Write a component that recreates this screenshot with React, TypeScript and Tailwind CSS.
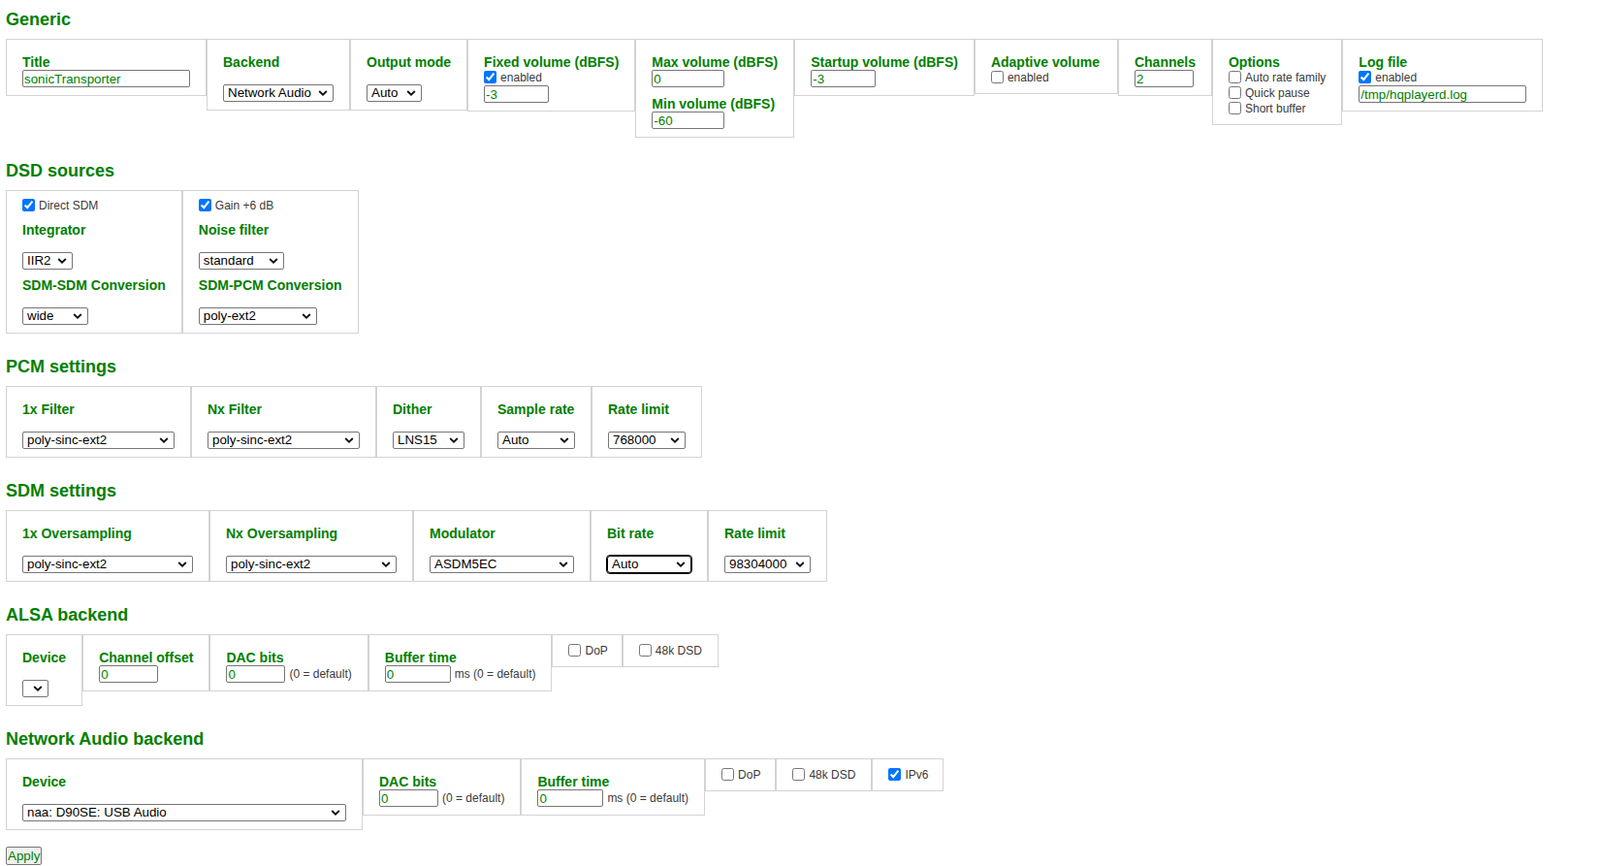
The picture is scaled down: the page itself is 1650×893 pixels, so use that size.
import React from "react";

type Kids = { children?: React.ReactNode; className?: string };

function Label({ children, className = "" }: Kids) {
  return (
    <div className={"whitespace-nowrap text-[14px] leading-4 font-bold text-[#008000] " + className}>
      {children}
    </div>
  );
}

function Cell({ children, className = "pt-2" }: Kids) {
  return <div className={"shrink-0 border border-[#d3d3d3] pl-4 pb-2 " + (className.includes("pr-") ? className : "pr-4 " + className)}>{children}</div>;
}

function TextInput({ value, className = "" }: { value: string; className?: string }) {
  return (
    <input
      type="text"
      defaultValue={value}
      className={
        "block h-[18px] rounded-[2px] border border-[#767676] bg-white px-[1px] text-[13.33px] leading-4 text-[#008000] outline-none " +
        className
      }
    />
  );
}

function Sel({ text, className = "", focused = false }: { text: string; className?: string; focused?: boolean }) {
  return (
    <div
      className={
        "relative flex h-[18px] items-center whitespace-nowrap bg-white pl-[4px] text-[13.33px] leading-4 text-black " +
        (focused
          ? "rounded-[3px] border border-black outline-1 outline-black "
          : "rounded-[2px] border border-[#767676] ") +
        className
      }
    >
      <span>{text}</span>
      <svg
        className="absolute right-[5px] top-1/2 -translate-y-1/2"
        width="10"
        height="7"
        viewBox="0 0 10 7"
      >
        <path d="M1.2 1.5l3.8 3.6 3.8-3.6" fill="none" stroke="#111" strokeWidth="1.9" />
      </svg>
    </div>
  );
}

function Check({ label, checked = false }: { label: string; checked?: boolean }) {
  return (
    <label className="flex h-4 items-center gap-[4px] whitespace-nowrap text-[12px] leading-4 text-[#3a3a3a]">
      <input type="checkbox" defaultChecked={checked} className="m-0 mb-[2px] h-[13px] w-[13px] shrink-0" />
      <span>{label}</span>
    </label>
  );
}

function Hint({ children }: Kids) {
  return <span className="whitespace-nowrap text-[12px] leading-4 text-[#3a3a3a]">{children}</span>;
}

function Section({ title, children, first = false }: { title: string; children?: React.ReactNode; first?: boolean }) {
  return (
    <section className={first ? "" : "mt-6"}>
      <h3 className="h-[21px] text-[18px] leading-[21px] font-bold text-[#008000]">{title}</h3>
      <div className="mt-[9px] flex items-start">{children}</div>
    </section>
  );
}

function SelCell({ label, text, className, focused = false }: { label: string; text: string; className: string; focused?: boolean }) {
  return (
    <Cell>
      <Label className="mt-[7px]">{label}</Label>
      <Sel text={text} focused={focused} className={"mt-[15px] " + className} />
    </Cell>
  );
}

export default function App() {
  return (
    <div className="min-h-[893px] bg-white pl-[6px] pt-[10px] font-['Liberation_Sans',Arial,sans-serif]">
      <Section title="Generic" first>
        <Cell>
          <Label className="mt-[7px]">Title</Label>
          <TextInput value="sonicTransporter" className="w-[173px]" />
        </Cell>
        <SelCell label="Backend" text="Network Audio" className="w-[114px]" />
        <SelCell label="Output mode" text="Auto" className="w-[57px]" />
        <Cell>
          <Label className="mt-[7px]">Fixed volume (dBFS)</Label>
          <Check label="enabled" checked />
          <TextInput value="-3" className="w-[67px]" />
        </Cell>
        <Cell>
          <Label className="mt-[7px]">Max volume (dBFS)</Label>
          <TextInput value="0" className="w-[75px]" />
          <Label className="mt-[9px]">Min volume (dBFS)</Label>
          <TextInput value="-60" className="w-[75px]" />
        </Cell>
        <Cell>
          <Label className="mt-[7px]">Startup volume (dBFS)</Label>
          <TextInput value="-3" className="w-[67px]" />
        </Cell>
        <Cell>
          <Label className="mt-[7px] pr-[2px]">Adaptive volume</Label>
          <Check label="enabled" />
        </Cell>
        <Cell>
          <Label className="mt-[7px]">Channels</Label>
          <TextInput value="2" className="w-[61px]" />
        </Cell>
        <Cell>
          <Label className="mt-[7px]">Options</Label>
          <Check label="Auto rate family" />
          <Check label="Quick pause" />
          <Check label="Short buffer" />
        </Cell>
        <Cell>
          <Label className="mt-[7px]">Log file</Label>
          <Check label="enabled" checked />
          <TextInput value="/tmp/hqplayerd.log" className="w-[173px]" />
        </Cell>
      </Section>

      <Section title="DSD sources">
        <Cell className="pt-[7px]">
          <Check label="Direct SDM" checked />
          <Label className="mt-[9px]">Integrator</Label>
          <Sel text="IIR2" className="mt-[15px] w-[52px]" />
          <Label className="mt-[8px]">SDM-SDM Conversion</Label>
          <Sel text="wide" className="mt-[15px] w-[68px]" />
        </Cell>
        <Cell className="pt-[7px]">
          <Check label="Gain +6 dB" checked />
          <Label className="mt-[9px]">Noise filter</Label>
          <Sel text="standard" className="mt-[15px] w-[88px]" />
          <Label className="mt-[8px]">SDM-PCM Conversion</Label>
          <Sel text="poly-ext2" className="mt-[15px] w-[122px]" />
        </Cell>
      </Section>

      <Section title="PCM settings">
        <SelCell label="1x Filter" text="poly-sinc-ext2" className="w-[157px]" />
        <SelCell label="Nx Filter" text="poly-sinc-ext2" className="w-[157px]" />
        <SelCell label="Dither" text="LNS15" className="w-[74px]" />
        <SelCell label="Sample rate" text="Auto" className="w-[80px]" />
        <SelCell label="Rate limit" text="768000" className="w-[80px]" />
      </Section>

      <Section title="SDM settings">
        <SelCell label="1x Oversampling" text="poly-sinc-ext2" className="w-[176px]" />
        <SelCell label="Nx Oversampling" text="poly-sinc-ext2" className="w-[176px]" />
        <SelCell label="Modulator" text="ASDM5EC" className="w-[149px]" />
        <SelCell label="Bit rate" text="Auto" className="w-[87px]" focused />
        <SelCell label="Rate limit" text="98304000" className="w-[89px]" />
      </Section>

      <Section title="ALSA backend">
        <SelCell label="Device" text="" className="w-[27px]" />
        <Cell>
          <Label className="mt-[7px]">Channel offset</Label>
          <TextInput value="0" className="w-[61px]" />
        </Cell>
        <Cell>
          <Label className="mt-[7px]">DAC bits</Label>
          <div className="flex items-center gap-1">
            <TextInput value="0" className="w-[61px]" />
            <Hint>(0 = default)</Hint>
          </div>
        </Cell>
        <Cell>
          <Label className="mt-[7px]">Buffer time</Label>
          <div className="flex items-center gap-1">
            <TextInput value="0" className="w-[68px]" />
            <Hint>ms (0 = default)</Hint>
          </div>
        </Cell>
        <Cell className="pt-2 pr-[14px]">
          <Check label="DoP" />
        </Cell>
        <Cell>
          <Check label="48k DSD" />
        </Cell>
      </Section>

      <Section title="Network Audio backend">
        <SelCell label="Device" text="naa: D90SE: USB Audio" className="w-[334px]" />
        <Cell>
          <Label className="mt-[7px]">DAC bits</Label>
          <div className="flex items-center gap-1">
            <TextInput value="0" className="w-[61px]" />
            <Hint>(0 = default)</Hint>
          </div>
        </Cell>
        <Cell>
          <Label className="mt-[7px]">Buffer time</Label>
          <div className="flex items-center gap-1">
            <TextInput value="0" className="w-[68px]" />
            <Hint>ms (0 = default)</Hint>
          </div>
        </Cell>
        <Cell className="pt-2 pr-[15px]">
          <Check label="DoP" />
        </Cell>
        <Cell>
          <Check label="48k DSD" />
        </Cell>
        <Cell className="pt-2 pr-[15px]">
          <Check label="IPv6" checked />
        </Cell>
      </Section>

      <button
        type="button"
        className="mt-[17px] block h-[19px] rounded-[2px] border border-[#767676] bg-[#efefef] px-[1px] text-[13.33px] leading-4 text-[#008000]"
      >
        Apply
      </button>
    </div>
  );
}
